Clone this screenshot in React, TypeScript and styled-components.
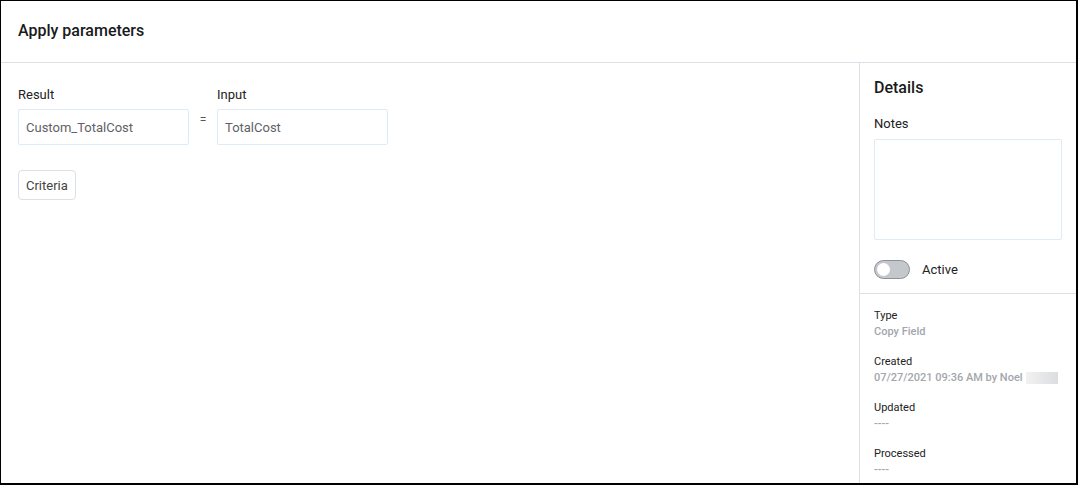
import styled, { createGlobalStyle } from "styled-components";

const Global = createGlobalStyle`
  html, body {
    margin: 0;
    padding: 0;
    background: #fff;
  }
  body {
    font-family: Roboto, "Liberation Sans", sans-serif;
    color: #303133;
  }
`;

const Frame = styled.div`
  box-sizing: border-box;
  width: 1078px;
  height: 485px;
  border: 1px solid #000;
  border-right-width: 2px;
  border-bottom-width: 2px;
  display: flex;
  flex-direction: column;
  overflow: hidden;
  background: #fff;
`;

const Header = styled.div`
  height: 61px;
  flex-shrink: 0;
  border-bottom: 1px solid #dcdfe6;
  display: flex;
  align-items: center;
  padding-left: 17px;
`;

const Title = styled.h1`
  margin: 0;
  font-size: 16px;
  font-weight: 500;
  color: #1a1a1a;
  padding-bottom: 3px;
`;

const Body = styled.div`
  flex: 1;
  display: flex;
  min-height: 0;
`;

const Main = styled.div`
  flex: 1;
  padding: 24px 17px;
`;

const FieldRow = styled.div`
  display: flex;
  align-items: flex-start;
`;

const Field = styled.div`
  display: flex;
  flex-direction: column;
`;

const Label = styled.label`
  font-size: 13px;
  font-weight: 400;
  color: #222;
  line-height: 16px;
  margin-bottom: 6px;
`;

const TextInput = styled.div`
  box-sizing: border-box;
  width: 171px;
  height: 36px;
  border: 1px solid #dcebf8;
  border-radius: 2px;
  padding: 0 7px;
  display: flex;
  align-items: center;
  font-size: 13px;
  color: #5f6268;
`;

const Equals = styled.span`
  width: 28px;
  text-align: center;
  font-size: 12px;
  color: #555;
  margin-top: 26px;
`;

const CriteriaButton = styled.button`
  margin-top: 25px;
  box-sizing: border-box;
  height: 30px;
  padding: 0 7px;
  background: #fff;
  border: 1px solid #dcdfe6;
  border-radius: 4px;
  font-family: inherit;
  font-size: 13px;
  color: #444;
`;

const Side = styled.aside`
  width: 216px;
  flex-shrink: 0;
  border-left: 1px solid #dcdfe6;
  display: flex;
  flex-direction: column;
`;

const SideTop = styled.div`
  padding: 15px 15px 14px 14px;
  border-bottom: 1px solid #dcdfe6;
`;

const SideTitle = styled.h2`
  margin: 0 0 18px;
  font-size: 16px;
  font-weight: 500;
  color: #1a1a1a;
  line-height: 20px;
`;

const NotesLabel = styled(Label)`
  display: block;
  margin-bottom: 7px;
`;

const Notes = styled.div`
  box-sizing: border-box;
  width: 188px;
  height: 101px;
  border: 1px solid #dcebf8;
  border-radius: 2px;
`;

const ToggleRow = styled.div`
  display: flex;
  align-items: center;
  gap: 12px;
  margin-top: 20px;
  font-size: 13px;
  color: #222;
`;

const Toggle = styled.span`
  box-sizing: border-box;
  position: relative;
  width: 36px;
  height: 19px;
  border-radius: 10px;
  background: #c4c7cc;
  border: 1px solid #8c9097;
  &::after {
    content: "";
    position: absolute;
    left: 2px;
    top: 2px;
    width: 13px;
    height: 13px;
    border-radius: 50%;
    background: #fff;
  }
`;

const Meta = styled.div`
  padding: 14px 15px 0 14px;
  display: flex;
  flex-direction: column;
  gap: 14px;
`;

const MetaItem = styled.div`
  display: flex;
  flex-direction: column;
`;

const MetaLabel = styled.span`
  font-size: 11px;
  color: #222;
  line-height: 16px;
`;

const MetaValue = styled.span`
  font-size: 11px;
  font-weight: 500;
  color: #a3a6ad;
  line-height: 16px;
  white-space: nowrap;
  display: flex;
  align-items: center;
`;

const Redacted = styled.span`
  display: inline-block;
  width: 32px;
  height: 12px;
  margin-left: 3px;
  background: linear-gradient(90deg, #f2f2f3, #dcdde0);
`;

const meta = [
  { label: "Type", value: "Copy Field" },
  { label: "Created", value: "07/27/2021 09:36 AM by Noel", redacted: true },
  { label: "Updated", value: "----" },
  { label: "Processed", value: "----" },
];

export default function App() {
  return (
    <>
      <Global />
      <Frame>
        <Header>
          <Title>Apply parameters</Title>
        </Header>
        <Body>
          <Main>
            <FieldRow>
              <Field>
                <Label>Result</Label>
                <TextInput>Custom_TotalCost</TextInput>
              </Field>
              <Equals>=</Equals>
              <Field>
                <Label>Input</Label>
                <TextInput>TotalCost</TextInput>
              </Field>
            </FieldRow>
            <CriteriaButton>Criteria</CriteriaButton>
          </Main>
          <Side>
            <SideTop>
              <SideTitle>Details</SideTitle>
              <NotesLabel>Notes</NotesLabel>
              <Notes />
              <ToggleRow>
                <Toggle />
                Active
              </ToggleRow>
            </SideTop>
            <Meta>
              {meta.map((m) => (
                <MetaItem key={m.label}>
                  <MetaLabel>{m.label}</MetaLabel>
                  <MetaValue>
                    {m.value}
                    {m.redacted && <Redacted />}
                  </MetaValue>
                </MetaItem>
              ))}
            </Meta>
          </Side>
        </Body>
      </Frame>
    </>
  );
}
